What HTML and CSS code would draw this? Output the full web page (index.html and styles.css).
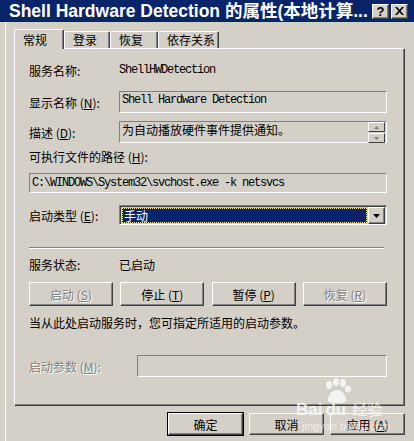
FILE: index.html
```html
<!DOCTYPE html>
<html lang="zh">
<head>
<meta charset="utf-8">
<link rel="stylesheet" href="styles.css">
</head>
<body>
<div class="win">
  <div class="titlebar">
    <span class="title">Shell Hardware Detection 的属性(本地计算...</span>
    <div class="tbtns">
      <span class="tbtn q">?</span>
      <span class="tbtn">
        <svg width="9" height="8" viewBox="0 0 9 8"><path d="M0 0h2l2.5 2.8L7 0h2L5.5 4 9 8H7L4.5 5.2 2 8H0l3.5-4z" fill="#000"/></svg>
      </span>
    </div>
  </div>
  <div class="body">
    <div class="tabs">
      <div class="tab sel">常规</div>
      <div class="tab">登录</div>
      <div class="tab">恢复</div>
      <div class="tab">依存关系</div>
    </div>
    <div class="panel">
      <div class="row r1"><span class="lbl">服务名称:</span><span class="mono">ShellHWDetection</span></div>
      <div class="row r2"><span class="lbl">显示名称 (<u>N</u>):</span><div class="box"><span class="mono">Shell Hardware Detection</span></div></div>
      <div class="row r3"><span class="lbl">描述 (<u>D</u>):</span>
        <div class="box desc"><span>为自动播放硬件事件提供通知。</span>
          <div class="spin">
            <span class="sb"><svg width="5" height="3" viewBox="0 0 5 3"><path d="M2.5 0L5 3H0z" fill="#808080"/></svg></span>
            <span class="sb"><svg width="5" height="3" viewBox="0 0 5 3"><path d="M0 0h5L2.5 3z" fill="#808080"/></svg></span>
          </div>
        </div>
      </div>
      <div class="line r4">可执行文件的路径 (<u>H</u>):</div>
      <div class="box path r5"><span class="mono">C:\WINDOWS\System32\svchost.exe -k netsvcs</span></div>
      <div class="row r6"><span class="lbl">启动类型 (<u>E</u>):</span>
        <div class="combo"><div class="csel"><span>手动</span></div>
          <span class="dd"><svg width="7" height="4" viewBox="0 0 7 4"><path d="M0 0h7L3.5 4z" fill="#000"/></svg></span>
        </div>
      </div>
      <div class="sep"></div>
      <div class="row r7"><span class="lbl">服务状态:</span><span>已启动</span></div>
      <div class="btnrow">
        <div class="btn dis">启动 (<u>S</u>)</div>
        <div class="btn">停止 (<u>T</u>)</div>
        <div class="btn">暂停 (<u>P</u>)</div>
        <div class="btn dis">恢复 (<u>R</u>)</div>
      </div>
      <div class="line r8">当从此处启动服务时，您可指定所适用的启动参数。</div>
      <div class="row r9"><span class="lbl dis wide">启动参数 (<u>M</u>):</span><div class="box param"></div></div>
    </div>
    <div class="footer">
      <div class="btn fb def">确定</div>
      <div class="btn fb">取消</div>
      <div class="btn fb">应用 (<u>A</u>)</div>
    </div>
  </div>
  <div class="wm">
    <svg class="paw" width="34" height="26" viewBox="0 0 34 26">
      <ellipse cx="9" cy="7" rx="3" ry="4" fill="rgba(255,255,255,0.75)"/>
      <ellipse cx="16" cy="4" rx="3" ry="4" fill="rgba(255,255,255,0.75)"/>
      <ellipse cx="23" cy="5" rx="3" ry="4" fill="rgba(255,255,255,0.75)"/>
      <ellipse cx="28" cy="11" rx="3" ry="3.5" fill="rgba(255,255,255,0.75)"/>
      <path d="M8 22c0-6 5-10 9-10s9 4 9 10c0 3-4 3-9 3s-9 0-9-3z" fill="rgba(255,255,255,0.75)"/>
    </svg>
    <div class="wmt"><span class="bai">Bai</span><span class="du">du</span><span class="jy">经验</span></div>
    <div class="wmu">jingyan.baidu.com</div>
  </div>
</div>
</body>
</html>
```
FILE: styles.css
```css
* { box-sizing: border-box; }
html, body { margin: 0; padding: 0; }
body {
  width: 414px;
  height: 441px;
  overflow: hidden;
  background: #d4d0c8;
  font-family: "Noto Sans CJK SC", "Liberation Sans", sans-serif;
  font-size: 12px;
  color: #000;
}
.win { position: relative; width: 414px; height: 441px; }
u { text-decoration: underline; text-underline-offset: 1px; }

.titlebar {
  height: 22px;
  background: #0a246a;
  display: flex;
  align-items: center;
  padding-left: 9px;
  padding-right: 6px;
}
.title {
  color: #fff;
  font-family: "Liberation Sans", "Noto Sans CJK SC", sans-serif;
  font-weight: bold;
  font-size: 17.5px;
  white-space: nowrap;
  flex: 1;
  overflow: hidden;
  line-height: 22px;
}
.tbtns { display: flex; gap: 2px; }
.tbtn {
  width: 17px;
  height: 15px;
  background: #d4d0c8;
  border-top: 1px solid #fff;
  border-left: 1px solid #fff;
  border-right: 1px solid #404040;
  border-bottom: 1px solid #404040;
  box-shadow: inset -1px -1px #808080;
  display: flex;
  align-items: center;
  justify-content: center;
}
.tbtn.q {
  font-family: "Liberation Sans", sans-serif;
  font-weight: bold;
  font-size: 13px;
  line-height: 1;
}

.body {
  margin-left: 5px;
  border-left: 1px solid #fff;
  padding-left: 8px;
  height: 419px;
  padding-top: 7px;
}
.tabs {
  display: flex;
  height: 19px;
  position: relative;
  z-index: 1;
}
.tab {
  margin-top: 2px;
  height: 17px;
  padding: 0 8px;
  border-top: 1px solid #fff;
  border-left: 1px solid #fff;
  border-right: 1px solid #404040;
  box-shadow: inset -1px 0 #808080;
  border-radius: 2px 2px 0 0;
  line-height: 15px;
  white-space: nowrap;
}
.tab:nth-child(2) { width: 46px; }
.tab:nth-child(3) { width: 48px; }
.tab:nth-child(4) { width: 61px; }
.tab.sel {
  width: 50px;
  margin-top: 0;
  height: 20px;
  background: #d4d0c8;
  line-height: 19px;
  padding-left: 8px;
}

.panel {
  width: 391px;
  height: 358px;
  border-top: 1px solid #fff;
  border-left: 1px solid #fff;
  border-right: 1px solid #404040;
  border-bottom: 1px solid #404040;
  box-shadow: inset -1px -1px #808080;
  padding-left: 14px;
  padding-right: 17px;
  display: flex;
  flex-direction: column;
}
.row { display: flex; align-items: center; }
.lbl { width: 90px; flex: none; white-space: nowrap; }
.lbl.wide { width: 108px; }
.line { height: 14px; line-height: 14px; white-space: nowrap; }
.mono {
  font-family: "Liberation Mono", monospace;
  font-size: 12px;
  letter-spacing: -1.2px;
  white-space: nowrap;
}
.box {
  flex: 1;
  height: 22px;
  border-top: 1px solid #808080;
  border-left: 1px solid #808080;
  border-right: 1px solid #fff;
  border-bottom: 1px solid #fff;
  padding-left: 2px;
  display: flex;
  align-items: flex-start;
  line-height: 16px;
}
.r1 { margin-top: 14px; height: 14px; }
.r2 { margin-top: 14px; }
.r3 { margin-top: 8px; }
.desc { justify-content: space-between; padding-right: 1px; }
.spin { display: flex; flex-direction: column; gap: 1px; padding-top: 0; }
.sb {
  width: 17px;
  height: 10px;
  background: #d4d0c8;
  border-top: 1px solid #fff;
  border-left: 1px solid #fff;
  border-right: 1px solid #404040;
  border-bottom: 1px solid #404040;
  display: flex;
  align-items: center;
  justify-content: center;
}
.r4 { margin-top: 7px; }
.path { flex: none; margin-top: 9px; height: 20px; line-height: 18px; }
.r6 { margin-top: 12px; }
.combo {
  flex: 1;
  height: 20px;
  border-top: 1px solid #808080;
  border-left: 1px solid #808080;
  border-right: 1px solid #fff;
  border-bottom: 1px solid #fff;
  box-shadow: inset 1px 1px #404040;
  padding: 2px 1px 1px 2px;
  display: flex;
  gap: 1px;
}
.csel {
  flex: 1;
  background: #0a246a;
  color: #fff;
  outline: 1px dotted #ffe8a0;
  outline-offset: -1px;
  padding-left: 2px;
  line-height: 15px;
}
.dd {
  width: 17px;
  margin-top: -1px;
  margin-bottom: -1px;
  background: #d4d0c8;
  border-top: 1px solid #fff;
  border-left: 1px solid #fff;
  border-right: 1px solid #404040;
  border-bottom: 1px solid #404040;
  box-shadow: inset -1px -1px #808080;
  display: flex;
  align-items: center;
  justify-content: center;
}
.sep {
  margin-top: 22px;
  height: 2px;
  border-top: 1px solid #808080;
  border-bottom: 1px solid #fff;
  margin-right: 3px;
}
.r7 { margin-top: 8px; height: 14px; }
.btnrow {
  margin-top: 11px;
  display: flex;
  justify-content: space-between;
  padding-right: 0;
}
.btn {
  width: 84px;
  height: 24px;
  background: #d4d0c8;
  border-top: 1px solid #fff;
  border-left: 1px solid #fff;
  border-right: 1px solid #404040;
  border-bottom: 1px solid #404040;
  box-shadow: inset -1px -1px #808080;
  display: flex;
  align-items: center;
  justify-content: center;
  white-space: nowrap;
}
.dis { color: #808080; text-shadow: 1px 1px #fff; }
.r8 { margin-top: 10px; }
.r9 { margin-top: 25px; }
.param { height: 22px; }

.footer {
  display: flex;
  justify-content: flex-end;
  gap: 6px;
  width: 391px;
  margin-top: 7px;
}
.btn.fb { width: 75px; height: 22px; }
.btn.def { outline: 1px solid #000; outline-offset: 0; }

.wm {
  position: absolute;
  left: 296px;
  top: 378px;
  width: 100px;
  height: 60px;
  pointer-events: none;
}
.paw { position: absolute; left: 24px; top: 0; }
.wmt {
  position: absolute;
  left: 0;
  top: 20px;
  white-space: nowrap;
  color: rgba(255,255,255,0.75);
  font-family: "Liberation Sans", sans-serif;
  font-weight: bold;
  font-size: 17px;
}
.wmt .du { margin-left: 3px; }
.wmt .jy { margin-left: 6px; font-family: "Noto Sans CJK SC", sans-serif; font-weight: normal; font-size: 15px; }
.wmu {
  position: absolute;
  left: 6px;
  top: 42px;
  color: rgba(255,255,255,0.6);
  font-family: "Liberation Sans", sans-serif;
  font-size: 11px;
  white-space: nowrap;
}
```
